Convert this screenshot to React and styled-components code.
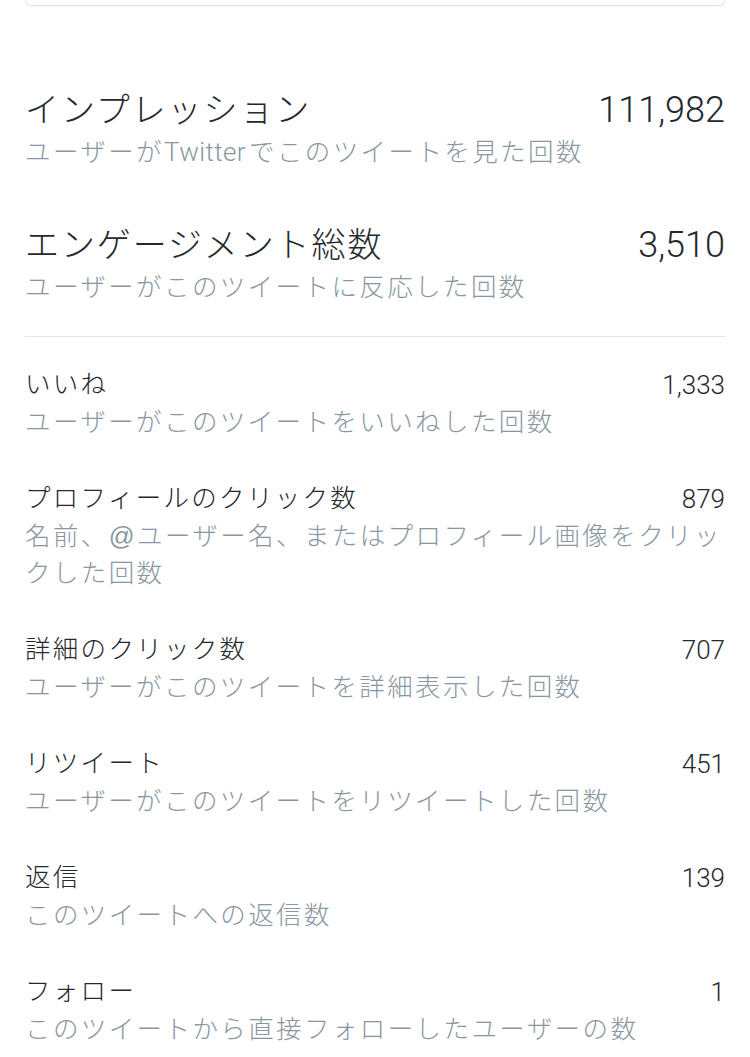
import React from "react";
import styled, { createGlobalStyle } from "styled-components";

const Global = createGlobalStyle`
  html, body { margin: 0; padding: 0; background: #ffffff; }
  body { font-family: "Liberation Sans", "Noto Sans CJK JP", sans-serif; -webkit-font-smoothing: antialiased; }
`;

const Page = styled.div`
  padding: 0 25px 40px;
  background: #ffffff;
`;

const CardEdge = styled.div`
  height: 5px;
  border: 1.5px solid #e1e5e8;
  border-top: none;
  border-radius: 0 0 8px 8px;
  box-shadow: 0 1px 1px rgba(0, 0, 0, 0.04);
`;

const Summary = styled.section`
  display: flex;
  flex-direction: column;
  gap: 52px;
  padding: 82px 0 30px;
  border-bottom: 1.5px solid #e3e6e8;
`;

const Details = styled.section`
  display: flex;
  flex-direction: column;
  gap: 39px;
  padding-top: 29px;
`;

const Metric = styled.div`
  display: flex;
  flex-direction: column;
`;

const Head = styled.div`
  display: flex;
  justify-content: space-between;
  align-items: center;
  height: ${(p) => (p.$big ? "44px" : "38px")};
`;

const Title = styled.div`
  color: #24292d;
  font-weight: 300;
  font-size: ${(p) => (p.$big ? "34px" : "25.5px")};
  letter-spacing: ${(p) => (p.$big ? "1.9px" : "2.3px")};
  line-height: 1;
  white-space: nowrap;
`;

const Value = styled.div`
  color: #24292d;
  font-family: Roboto, "Liberation Sans", sans-serif;
  font-weight: 300;
  font-size: ${(p) => (p.$big ? "36px" : "26px")};
  line-height: 1;
`;

const Desc = styled.div`
  color: #8a97a2;
  font-weight: 300;
  font-size: 25.5px;
  letter-spacing: 2.4px;
  line-height: 37px;
  margin-top: ${(p) => (p.$big ? "2px" : "0")};
`;

const Latin = styled.span`
  font-family: Roboto, "Liberation Sans", sans-serif;
  font-weight: 300;
  font-size: 26px;
  letter-spacing: 0.4px;
  margin-right: 3px;
`;

const summary = [
  {
    title: "インプレッション",
    value: "111,982",
    desc: (
      <>
        ユーザーが<Latin>Twitter</Latin>でこのツイートを見た回数
      </>
    ),
  },
  { title: "エンゲージメント総数", value: "3,510", desc: "ユーザーがこのツイートに反応した回数" },
];

const details = [
  { title: "いいね", value: "1,333", desc: "ユーザーがこのツイートをいいねした回数" },
  { title: "プロフィールのクリック数", value: "879", desc: "名前、@ユーザー名、またはプロフィール画像をクリックした回数" },
  { title: "詳細のクリック数", value: "707", desc: "ユーザーがこのツイートを詳細表示した回数" },
  { title: "リツイート", value: "451", desc: "ユーザーがこのツイートをリツイートした回数" },
  { title: "返信", value: "139", desc: "このツイートへの返信数" },
  { title: "フォロー", value: "1", desc: "このツイートから直接フォローしたユーザーの数" },
];

export default function App() {
  return (
    <>
      <Global />
      <Page>
        <CardEdge />
        <Summary>
          {summary.map((m) => (
            <Metric key={m.title}>
              <Head $big>
                <Title $big>{m.title}</Title>
                <Value $big>{m.value}</Value>
              </Head>
              <Desc $big>{m.desc}</Desc>
            </Metric>
          ))}
        </Summary>
        <Details>
          {details.map((m) => (
            <Metric key={m.title}>
              <Head>
                <Title>{m.title}</Title>
                <Value>{m.value}</Value>
              </Head>
              <Desc>{m.desc}</Desc>
            </Metric>
          ))}
        </Details>
      </Page>
    </>
  );
}
